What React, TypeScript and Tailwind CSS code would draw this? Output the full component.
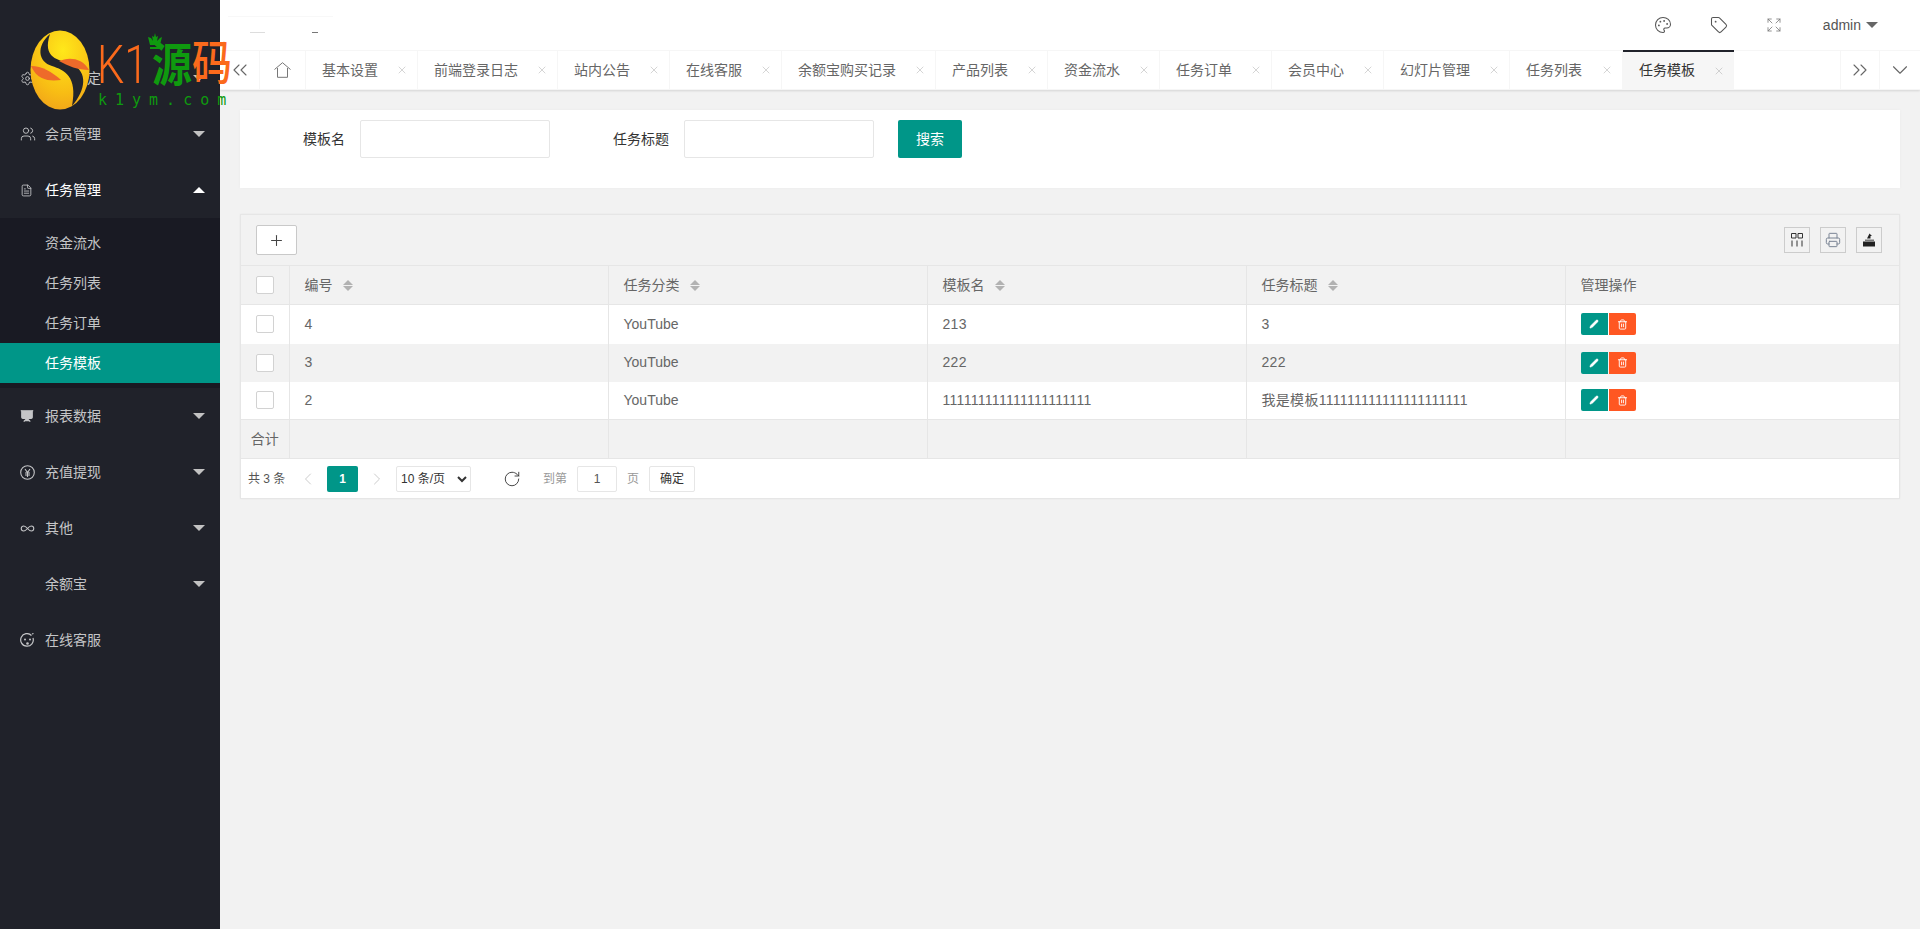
import React from 'react';
import {
  ChevronDown,
  ChevronLeft,
  ChevronRight,
  ChevronsLeft,
  ChevronsRight,
  Expand,
  FileText,
  Infinity as InfinityIcon,
  Palette,
  Pencil,
  Plus,
  Presentation,
  Printer,
  RotateCw,
  Settings,
  Tag,
  Trash2,
  Users,
  X
} from 'lucide-react';

const FONT = "font-['Liberation_Sans','Noto_Sans_CJK_SC',sans-serif]";

const tabs = [
  { name: '基本设置', width: 'w-[112px]' },
  { name: '前端登录日志', width: 'w-[140px]' },
  { name: '站内公告', width: 'w-[112px]' },
  { name: '在线客服', width: 'w-[112px]' },
  { name: '余额宝购买记录', width: 'w-[154px]' },
  { name: '产品列表', width: 'w-[112px]' },
  { name: '资金流水', width: 'w-[112px]' },
  { name: '任务订单', width: 'w-[112px]' },
  { name: '会员中心', width: 'w-[112px]' },
  { name: '幻灯片管理', width: 'w-[126px]' },
  { name: '任务列表', width: 'w-[113px]' }
];

const rows = [
  { id: '4', cat: 'YouTube', name: '213', title: '3' },
  { id: '3', cat: 'YouTube', name: '222', title: '222' },
  { id: '2', cat: 'YouTube', name: '111111111111111111111', title: '我是模板111111111111111111111' }
];

function Caret({ up }: { up?: boolean }) {
  return (
    <span
      className={
        up
          ? 'border-x-[6px] border-b-[6px] border-x-transparent border-b-white'
          : 'border-x-[6px] border-t-[6px] border-x-transparent border-t-[#c2c2c2]'
      }
    />
  );
}

function MenuItem({ icon, label, open }: { icon?: React.ReactNode; label: string; open?: boolean }) {
  return (
    <div className={`flex h-[56px] items-center pl-[20px] pr-[15px] text-[14px] ${open ? 'text-white' : 'text-[#c4c5c7]'}`}>
      <span className="flex w-[25px] shrink-0 items-center text-[#c4c5c7]">{icon}</span>
      <span className="flex-1">{label}</span>
      <Caret up={open} />
    </div>
  );
}

function SortIcon() {
  return (
    <span className="ml-[10px] inline-flex flex-col gap-px align-middle">
      <span className="border-x-[5px] border-b-[5px] border-x-transparent border-b-[#b2b2b2]" />
      <span className="border-x-[5px] border-t-[5px] border-x-transparent border-t-[#b2b2b2]" />
    </span>
  );
}

function Checkbox() {
  return <span className="mx-auto block h-[18px] w-[18px] rounded-[2px] border border-[#d2d2d2] bg-white" />;
}

function YenIcon() {
  return (
    <svg width="15" height="15" viewBox="0 0 15 15" fill="none" stroke="currentColor" strokeWidth="1.1">
      <circle cx="7.500" cy="7.500" r="6.800" />
      <path d="M5 4l2.500 3.500L10 4M7.500 7.500V12M5 8h5M5 10h5" />
    </svg>
  );
}

function ServiceIcon() {
  return (
    <svg width="15" height="15" viewBox="0 0 15 15" fill="none" stroke="currentColor" strokeWidth="1.2">
      <path d="M11.500 2.500A6.300 6.300 0 1 0 13 5" />
      <path d="M12 1l1.500-.5" />
      <circle cx="5" cy="6.500" r="1" fill="currentColor" stroke="none" />
      <circle cx="10" cy="6.500" r="1" fill="currentColor" stroke="none" />
      <circle cx="7.500" cy="10.500" r="1.300" fill="currentColor" stroke="none" />
    </svg>
  );
}

function Logo() {
  return (
    <div className="pointer-events-none absolute left-[30px] top-[30px] z-20 h-[80px] w-[202px]">
      <svg width="60" height="80" viewBox="0 0 60 80">
        <defs>
          <radialGradient id="egg" cx="0.55" cy="0.25" r="0.9">
            <stop offset="0" stopColor="#ffe81a" />
            <stop offset="0.6" stopColor="#f8bd14" />
            <stop offset="1" stopColor="#ee9a1c" />
          </radialGradient>
        </defs>
        <ellipse cx="30" cy="40" rx="29.500" ry="39.500" fill="url(#egg)" />
        <path d="M20 4 C6 16 8 32 22 36 C34 40 48 46 42 76 C56 60 58 42 42 34 C28 30 12 28 20 4Z" fill="#23252c" />
        <path d="M1 36 C12 36 22 42 31 50 C22 51 8 52 1 36Z" fill="#ee6a2a" />
        <path d="M59 40 C48 40 38 36 29 31 C38 27 52 27 59 40Z" fill="#ee6a2a" />
      </svg>
      <span className="absolute left-[67px] top-[-3px] origin-left scale-x-[0.8] font-['Roboto',sans-serif] text-[54px] leading-[76px] font-light text-[#fb6a1c]">
        K1
      </span>
      <svg className="absolute left-[118px] top-[3px]" width="15" height="17" viewBox="0 0 15 17" fill="#0f9a0f">
        <path d="M7 0l1 4 2-1-1 5 3-3 2-1-2 8H2L0 4l3 1 2 3-1-5 2 1zM2 14h11v2H2z" />
      </svg>
      <span className="absolute left-[122px] top-[8px] origin-top scale-y-[1.17] font-['Noto_Sans_CJK_SC',sans-serif] text-[40px] leading-[40px] font-bold text-[#0f9a0f]">
        源
      </span>
      <span className="absolute left-[162px] top-[6px] origin-top scale-y-[1.2] font-['Noto_Sans_CJK_SC',sans-serif] text-[40px] leading-[40px] font-medium text-[#fb6a1c]">
        码
      </span>
      <span className="absolute left-[68px] top-[61px] font-['DejaVu_Sans_Mono',monospace] text-[15px] leading-[18px] tracking-[8px] whitespace-nowrap text-[#0f9a0f]">
        k1ym.com
      </span>
    </div>
  );
}

export default function App() {
  return (
    <div className={`${FONT} relative flex h-[929px] w-[1920px] overflow-hidden bg-[#f2f2f2] text-[14px] text-[#666]`}>
      <Logo />

      {/* Sidebar */}
      <aside className="w-[220px] shrink-0 bg-[#20222a] pt-[50px]">
        <MenuItem icon={<Settings size={15} strokeWidth={1.5} />} label="系统设定" />
        <MenuItem icon={<Users size={16} strokeWidth={1.4} />} label="会员管理" />
        <MenuItem icon={<FileText size={13} strokeWidth={1.6} />} label="任务管理" open />
        <div className="bg-[#191a23] py-[5px] text-[14px] text-[#c4c5c7]">
          <div className="flex h-[40px] items-center pl-[45px]">资金流水</div>
          <div className="flex h-[40px] items-center pl-[45px]">任务列表</div>
          <div className="flex h-[40px] items-center pl-[45px]">任务订单</div>
          <div className="flex h-[40px] items-center bg-[#009688] pl-[45px] text-white">任务模板</div>
        </div>
        <MenuItem icon={<Presentation size={14} strokeWidth={2} fill="#c4c5c7" />} label="报表数据" />
        <MenuItem icon={<YenIcon />} label="充值提现" />
        <MenuItem icon={<InfinityIcon size={15} strokeWidth={1.8} />} label="其他" />
        <MenuItem label="余额宝" />
        <div className="flex h-[56px] items-center pl-[20px] text-[#c4c5c7]">
          <span className="w-[25px]">
            <ServiceIcon />
          </span>
          在线客服
        </div>
      </aside>

      <div className="flex min-w-0 flex-1 flex-col">
        {/* Top bar */}
        <header className="relative flex h-[50px] items-center justify-end bg-white">
          <span className="absolute left-[8px] top-[16px] h-px w-[105px] bg-[#f8f8f8]" />
          <span className="absolute left-[30px] top-[32px] h-px w-[15px] bg-[#ddd]" />
          <span className="absolute left-[92px] top-[32px] h-px w-[6px] bg-[#777]" />
          <Palette size={18} strokeWidth={1.4} className="mr-[38px] text-[#555]" />
          <Tag size={18} strokeWidth={1.4} className="mr-[38px] text-[#555]" />
          <Expand size={16} strokeWidth={1.2} className="mr-[41px] text-[#777]" />
          <span className="text-[14px] text-[#555]">admin</span>
          <span className="ml-[5px] mr-[42px] border-x-[6px] border-t-[6px] border-x-transparent border-t-[#666]" />
        </header>

        {/* Tabs */}
        <nav className="flex h-[40px] border-y border-[#f6f6f6] bg-white shadow-[0_1px_2px_rgba(0,0,0,0.12)]">
          <div className="flex w-[40px] items-center justify-center border-r border-[#f6f6f6]">
            <ChevronsLeft size={24} strokeWidth={1.1} />
          </div>
          <div className="flex w-[46px] items-center justify-center border-r border-[#f6f6f6]">
            <svg width="17" height="16" viewBox="0 0 17 16" fill="none" stroke="#777" strokeWidth="1">
              <path d="M.5 7.500 8.500.7l8 6.800M3.500 6v9.300h10V6" />
            </svg>
          </div>
          {tabs.map(tab => (
            <div
              key={tab.name}
              className={`${tab.width} flex items-center justify-between border-r border-[#f6f6f6] pl-[16px] pr-[9px] text-[14px]`}
            >
              {tab.name}
              <X size={12} strokeWidth={1} className="text-[#aaa]" />
            </div>
          ))}
          <div className="-mt-px flex w-[111px] items-center justify-between border-t-2 border-[#20222a] bg-[#f6f6f6] pl-[16px] pr-[9px] text-[#333]">
            任务模板
            <X size={12} strokeWidth={1} className="text-[#aaa]" />
          </div>
          <div className="flex-1" />
          <div className="flex w-[40px] items-center justify-center border-x border-[#f6f6f6]">
            <ChevronsRight size={24} strokeWidth={1.1} />
          </div>
          <div className="flex w-[40px] items-center justify-center">
            <ChevronDown size={26} strokeWidth={1} />
          </div>
        </nav>

        <main className="px-[20px] pt-[20px]">
          {/* Search */}
          <section className="flex h-[78px] items-start bg-white pt-[10px] shadow-[0_0_4px_rgba(0,0,0,0.03)]">
            <label className="w-[120px] pr-[15px] text-right leading-[38px] text-[#333]">模板名</label>
            <input className="h-[38px] w-[190px] rounded-[2px] border border-[#e6e6e6] bg-white" />
            <label className="w-[134px] pr-[15px] text-right leading-[38px] text-[#333]">任务标题</label>
            <input className="h-[38px] w-[190px] rounded-[2px] border border-[#e6e6e6] bg-white" />
            <button className="ml-[24px] h-[38px] w-[64px] rounded-[2px] bg-[#009688] text-white">搜索</button>
          </section>

          {/* Table */}
          <section className="mt-[26px] border border-[#e6e6e6] shadow-[0_0_2px_rgba(0,0,0,0.05)]">
            <div className="flex h-[50px] items-center justify-between pl-[15px] pr-[17px]">
              <button className="flex h-[30px] w-[41px] items-center justify-center rounded-[2px] border border-[#c9c9c9] bg-white text-[#444]">
                <Plus size={17} strokeWidth={1.5} />
              </button>
              <div className="flex gap-[10px]">
                <span className="flex h-[26px] w-[26px] items-center justify-center border border-[#ccc] text-[#333]">
                  <svg width="14" height="14" viewBox="0 0 14 14" fill="none" stroke="currentColor">
                    <path d="M1.500.5h4.500v4.500h-4.500zM8 .5h4.500v4.500H8zM2 7.500v6M7 7.500v6M12 7.500v6" />
                  </svg>
                </span>
                <span className="flex h-[26px] w-[26px] items-center justify-center border border-[#ccc] text-[#7a8494]">
                  <Printer size={16} strokeWidth={1.5} />
                </span>
                <span className="flex h-[26px] w-[26px] items-center justify-center border border-[#ccc] text-[#222]">
                  <svg width="14" height="14" viewBox="0 0 14 14" fill="currentColor">
                    <path d="M5 5.500 7.500.5 10 3H8.500v2.500z" />
                    <path d="M3 6.500h9V8H3z" fill="#777" />
                    <path d="M1 8.500h12v5H1z" />
                  </svg>
                </span>
              </div>
            </div>

            <table className="w-full table-fixed border-collapse">
              <colgroup>
                <col className="w-[48px]" />
                <col className="w-[319px]" />
                <col className="w-[319px]" />
                <col className="w-[319px]" />
                <col className="w-[319px]" />
                <col />
              </colgroup>
              <thead>
                <tr className="h-[39px] border-y border-[#e6e6e6] text-left font-normal">
                  <th className="border-r border-[#e6e6e6] font-normal"><Checkbox /></th>
                  <th className="border-r border-[#e6e6e6] pl-[15px] font-normal">编号<SortIcon /></th>
                  <th className="border-r border-[#e6e6e6] pl-[15px] font-normal">任务分类<SortIcon /></th>
                  <th className="border-r border-[#e6e6e6] pl-[15px] font-normal">模板名<SortIcon /></th>
                  <th className="border-r border-[#e6e6e6] pl-[15px] font-normal">任务标题<SortIcon /></th>
                  <th className="pl-[15px] font-normal">管理操作</th>
                </tr>
              </thead>
              <tbody>
                {rows.map((row, i) => (
                  <tr key={row.id} className={`${i === 0 ? 'h-[39px]' : 'h-[38px]'} ${i === 1 ? 'bg-[#f2f2f2]' : 'bg-white'}`}>
                    <td className="border-r border-[#e6e6e6]"><Checkbox /></td>
                    <td className="border-r border-[#e6e6e6] pl-[15px]">{row.id}</td>
                    <td className="border-r border-[#e6e6e6] pl-[15px]">{row.cat}</td>
                    <td className="border-r border-[#e6e6e6] pl-[15px] tracking-[0.3px]">{row.name}</td>
                    <td className="border-r border-[#e6e6e6] pl-[15px] tracking-[0.3px]">{row.title}</td>
                    <td className="pl-[15px]">
                      <div className="flex gap-px">
                        <span className="flex h-[22px] w-[27px] items-center justify-center rounded-l-[2px] bg-[#009688] text-white">
                          <Pencil size={10} fill="white" strokeWidth={1} />
                        </span>
                        <span className="flex h-[22px] w-[27px] items-center justify-center rounded-r-[2px] bg-[#ff5722] text-white">
                          <Trash2 size={11} strokeWidth={2} />
                        </span>
                      </div>
                    </td>
                  </tr>
                ))}
                <tr className="h-[39px] border-y border-[#e6e6e6]">
                  <td className="border-r border-[#e6e6e6] text-center">合计</td>
                  <td className="border-r border-[#e6e6e6]" />
                  <td className="border-r border-[#e6e6e6]" />
                  <td className="border-r border-[#e6e6e6]" />
                  <td className="border-r border-[#e6e6e6]" />
                  <td />
                </tr>
              </tbody>
            </table>

            {/* Pager */}
            <div className="flex h-[39px] items-center bg-white pl-[7px] text-[12px]">
              <span className="w-[50px] text-[#555]">共 3 条</span>
              <ChevronLeft size={20} strokeWidth={1.2} className="text-[#ccc]" />
              <span className="ml-[9px] flex h-[26px] w-[31px] items-center justify-center rounded-[2px] bg-[#009688] font-bold text-white">1</span>
              <ChevronRight size={20} strokeWidth={1.2} className="ml-[9px] text-[#ccc]" />
              <select className="ml-[9px] h-[26px] w-[75px] rounded-[2px] border border-[#e6e6e6] bg-white text-[12px] text-[#333]">
                <option>10 条/页</option>
              </select>
              <RotateCw size={18} strokeWidth={1.2} className="ml-[32px] text-[#333]" />
              <span className="ml-[22px] text-[#999]">到第</span>
              <input readOnly value="1" className="ml-[10px] h-[26px] w-[40px] rounded-[2px] border border-[#e6e6e6] text-center text-[#555]" />
              <span className="ml-[10px] text-[#999]">页</span>
              <button className="ml-[10px] h-[26px] w-[46px] rounded-[2px] border border-[#e6e6e6] text-[#333]">确定</button>
            </div>
          </section>
        </main>
      </div>
    </div>
  );
}
